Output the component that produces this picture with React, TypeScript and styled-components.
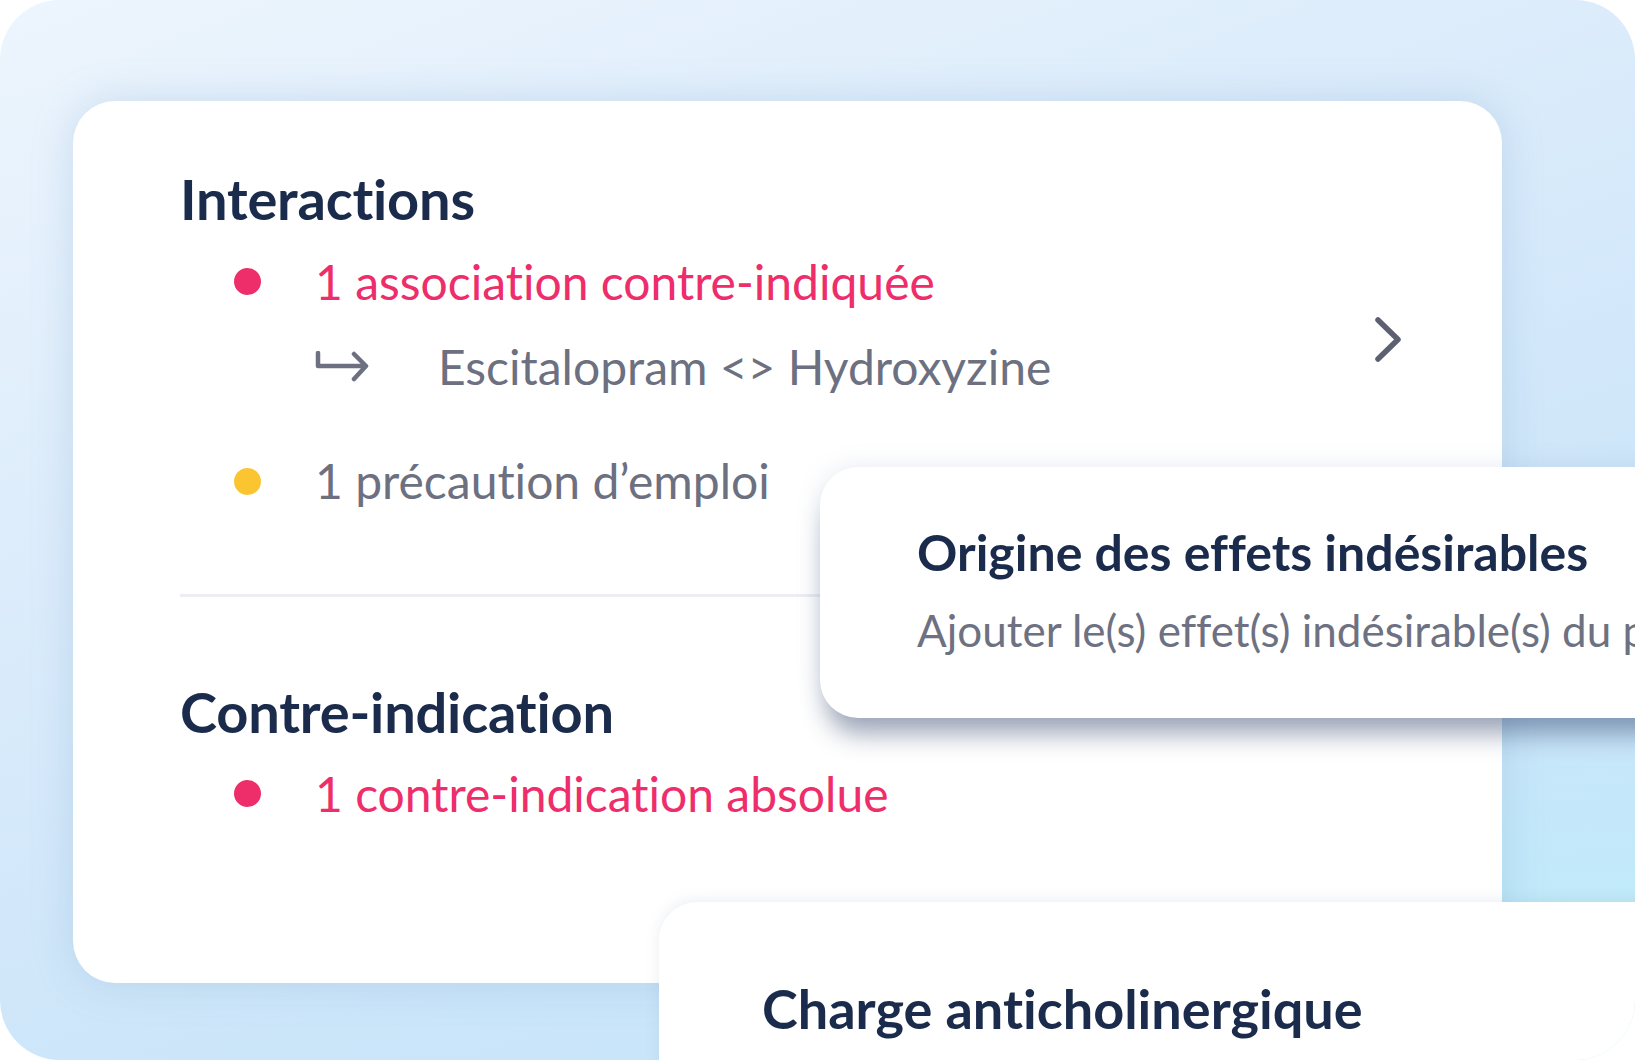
import React from "react";
import styled, { createGlobalStyle } from "styled-components";

const Global = createGlobalStyle`
  html, body { margin: 0; padding: 0; background: #ffffff; overflow: hidden; }
  body {
    font-family: "Lato", "Inter", sans-serif;
    font-variant-ligatures: none;
    font-feature-settings: "liga" 0, "clig" 0;
  }
`;

const Frame = styled.div`
  position: relative;
  width: 1635px;
  height: 1060px;
  border-radius: 60px;
  overflow: hidden;
  background:
    radial-gradient(ellipse 900px 500px at 1635px 1060px, rgba(185, 238, 250, 0.95), rgba(185, 238, 250, 0) 70%),
    linear-gradient(160deg, #edf5fd 0%, #dcecfb 35%, #cbe5f9 70%, #c6e6f9 100%);
  padding: 101px 0 0 73px;
  box-sizing: border-box;
`;

const MainCard = styled.div`
  width: 1429px;
  height: 882px;
  box-sizing: border-box;
  background: #ffffff;
  border-radius: 42px;
  box-shadow: 0 0 40px rgba(120, 160, 205, 0.28);
  padding: 64px 100px 0 107px;
  display: flex;
  flex-direction: column;
`;

const Heading = styled.h2<{ $mt?: number }>`
  margin: ${(p) => p.$mt ?? 0}px 0 0 0;
  font-family: "Lato", sans-serif;
  font-weight: 700;
  font-size: 56px;
  line-height: 1.2;
  color: #1b2b4b;
  letter-spacing: -0.2px;
`;

const Group = styled.div<{ $mt: number }>`
  display: flex;
  align-items: center;
  justify-content: space-between;
  margin-top: ${(p) => p.$mt}px;
`;

const List = styled.div`
  display: flex;
  flex-direction: column;
`;

const Row = styled.div<{ $mt?: number }>`
  display: flex;
  align-items: center;
  margin-top: ${(p) => p.$mt ?? 0}px;
  padding-left: 54px;
`;

const Dot = styled.span<{ $color: string }>`
  width: 27px;
  height: 27px;
  border-radius: 50%;
  background: ${(p) => p.$color};
  flex: none;
  margin-right: 54px;
`;

const ItemText = styled.span<{ $color: string }>`
  font-family: "Lato", sans-serif;
  font-weight: 400;
  font-size: 48px;
  line-height: 1.2;
  color: ${(p) => p.$color};
  white-space: nowrap;
`;

const SubRow = styled.div`
  display: flex;
  align-items: center;
  margin-top: 27px;
  padding-left: 135px;
`;

const ArrowBox = styled.span`
  width: 55px;
  flex: none;
  margin-right: 68px;
  display: flex;
  align-items: center;
`;

const Chevron = styled.span`
  display: flex;
  margin-top: 30px;
`;

const Divider = styled.hr`
  margin: 84px 0 0 0;
  border: none;
  height: 3px;
  background: #eceef2;
`;

const Popup = styled.div<{ $left: number; $top: number; $h: number; $pl: number }>`
  position: absolute;
  left: ${(p) => p.$left}px;
  top: ${(p) => p.$top}px;
  width: 1100px;
  height: ${(p) => p.$h}px;
  box-sizing: border-box;
  background: #ffffff;
  border-radius: 38px;
  padding-left: ${(p) => p.$pl}px;
  display: flex;
  flex-direction: column;
`;

const ShadowPopup = styled(Popup)`
  box-shadow: 0 24px 26px -8px rgba(35, 55, 95, 0.42), 0 0 24px rgba(120, 140, 170, 0.18);
  padding-top: 55px;
`;

const FlatPopup = styled(Popup)`
  box-shadow: 0 -2px 14px rgba(120, 140, 170, 0.15);
  padding-top: 75px;
`;

const PopupTitle = styled.div<{ $size: number }>`
  font-family: "Lato", sans-serif;
  font-weight: 700;
  font-size: ${(p) => p.$size}px;
  line-height: 1.2;
  color: #1b2b4b;
  white-space: nowrap;
`;

const PopupSub = styled.div`
  font-family: "Lato", sans-serif;
  font-weight: 400;
  font-size: 44px;
  line-height: 1.2;
  color: #6d7181;
  white-space: nowrap;
  margin-top: 22px;
`;

const RED = "#ee2d6b";
const GRAY = "#6c7080";

export default function App() {
  return (
    <>
      <Global />
      <Frame>
        <MainCard>
          <Heading>Interactions</Heading>
          <Group $mt={21}>
            <List>
              <Row>
                <Dot $color={RED} />
                <ItemText $color={RED}>1 association contre-indiquée</ItemText>
              </Row>
              <SubRow>
                <ArrowBox>
                  <svg width="55" height="32" viewBox="0 0 55 32" fill="none">
                    <path
                      d="M3 2 V15 H50 M39 3 L51 15 L39 28"
                      stroke={GRAY}
                      strokeWidth="4.5"
                      strokeLinecap="round"
                      strokeLinejoin="round"
                    />
                  </svg>
                </ArrowBox>
                <ItemText $color={GRAY}>Escitalopram &lt;&gt; Hydroxyzine</ItemText>
              </SubRow>
            </List>
            <Chevron>
              <svg width="28" height="47" viewBox="0 0 28 47" fill="none">
                <path
                  d="M4 4 L24 23.5 L4 43"
                  stroke="#5c6070"
                  strokeWidth="5.5"
                  strokeLinecap="round"
                  strokeLinejoin="round"
                />
              </svg>
            </Chevron>
          </Group>
          <Row $mt={57}>
            <Dot $color="#fbc531" />
            <ItemText $color={GRAY}>1 précaution d’emploi</ItemText>
          </Row>
          <Divider />
          <Heading $mt={81}>Contre-indication</Heading>
          <Row $mt={20}>
            <Dot $color={RED} />
            <ItemText $color={RED}>1 contre-indication absolue</ItemText>
          </Row>
        </MainCard>
        <ShadowPopup $left={820} $top={467} $h={251} $pl={97}>
          <PopupTitle $size={50}>Origine des effets indésirables</PopupTitle>
          <PopupSub>Ajouter le(s) effet(s) indésirable(s) du patient</PopupSub>
        </ShadowPopup>
        <FlatPopup $left={659} $top={902} $h={300} $pl={103}>
          <PopupTitle $size={54}>Charge anticholinergique</PopupTitle>
        </FlatPopup>
      </Frame>
    </>
  );
}
